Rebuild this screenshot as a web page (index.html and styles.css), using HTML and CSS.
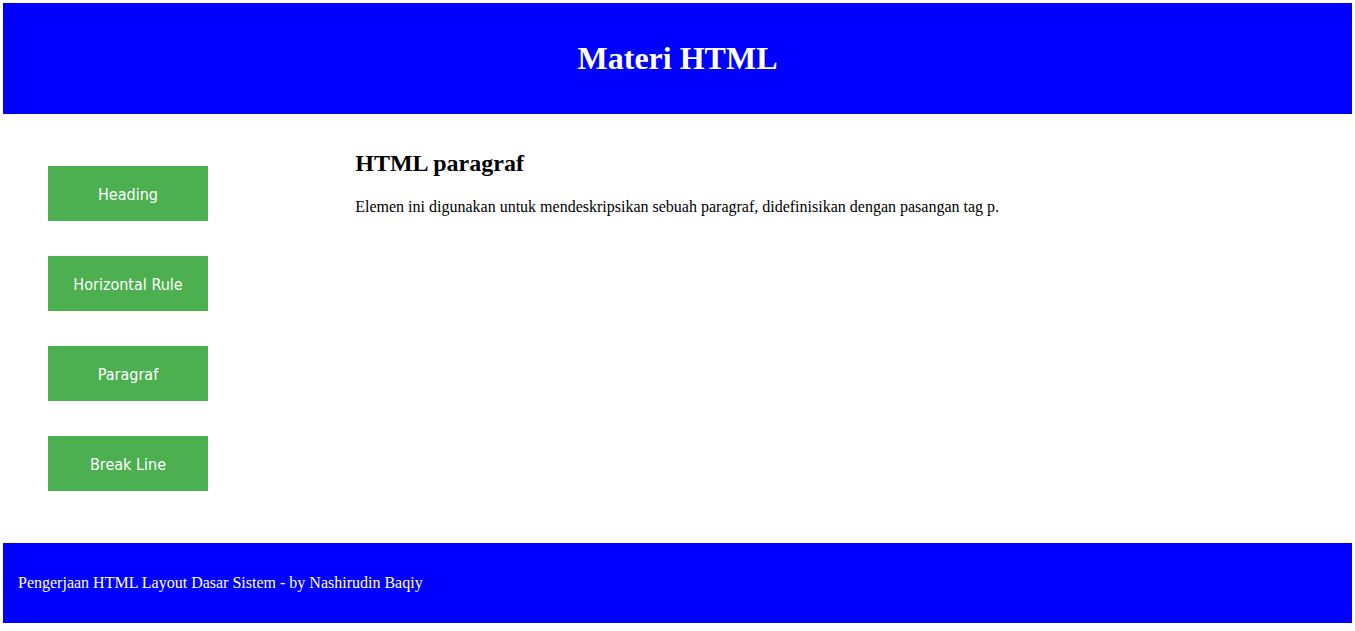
FILE: index.html
```html
<!DOCTYPE html>
<html lang="id">
<head>
<meta charset="utf-8">
<title>Materi HTML</title>
<link rel="stylesheet" href="styles.css">
</head>
<body>
<header class="site-header">
  <h1 class="site-title">Materi HTML</h1>
</header>
<div class="main">
  <nav class="sidebar">
    <a class="nav-btn" href="#">Heading</a>
    <a class="nav-btn" href="#">Horizontal Rule</a>
    <a class="nav-btn" href="#">Paragraf</a>
    <a class="nav-btn" href="#">Break Line</a>
  </nav>
  <section class="content">
    <h2 class="content-title">HTML paragraf</h2>
    <p class="content-text">Elemen ini digunakan untuk mendeskripsikan sebuah paragraf, didefinisikan dengan pasangan tag p.</p>
  </section>
</div>
<footer class="site-footer">
  <p class="footer-text">Pengerjaan HTML Layout Dasar Sistem - by Nashirudin Baqiy</p>
</footer>
</body>
</html>
```
FILE: styles.css
```css
html, body {
  background: #ffffff;
}
body {
  margin: 3px;
  font-family: "Liberation Serif", "Times New Roman", serif;
  font-size: 16px;
  color: #000000;
}
.site-header {
  background: #0000ff;
  height: 111px;
  display: flex;
  align-items: center;
  justify-content: center;
}
.site-title {
  margin: 0;
  color: #ffffff;
  font-size: 32px;
  font-weight: bold;
}
.main {
  display: flex;
  height: 429px;
}
.sidebar {
  width: 25%;
  flex: none;
  box-sizing: border-box;
  padding: 52px 0 0 45px;
  display: flex;
  flex-direction: column;
  gap: 35px;
}
.nav-btn {
  display: flex;
  align-items: center;
  justify-content: center;
  box-sizing: border-box;
  width: 160px;
  height: 55px;
  padding-top: 2px;
  background: #4caf50;
  color: #ffffff;
  text-decoration: none;
  font-family: "DejaVu Sans Condensed", "DejaVu Sans", sans-serif;
  font-stretch: condensed;
  font-size: 16px;
}
.content {
  flex: 1;
  padding: 16px 15px;
}
.content-title {
  font-size: 24px;
  margin: 20px 0 21px;
}
.content-text {
  margin: 0;
}
.site-footer {
  background: #0000ff;
  height: 80px;
  display: flex;
  align-items: center;
  padding: 0 15px;
}
.footer-text {
  margin: 0;
  color: #ffffff;
}
```
